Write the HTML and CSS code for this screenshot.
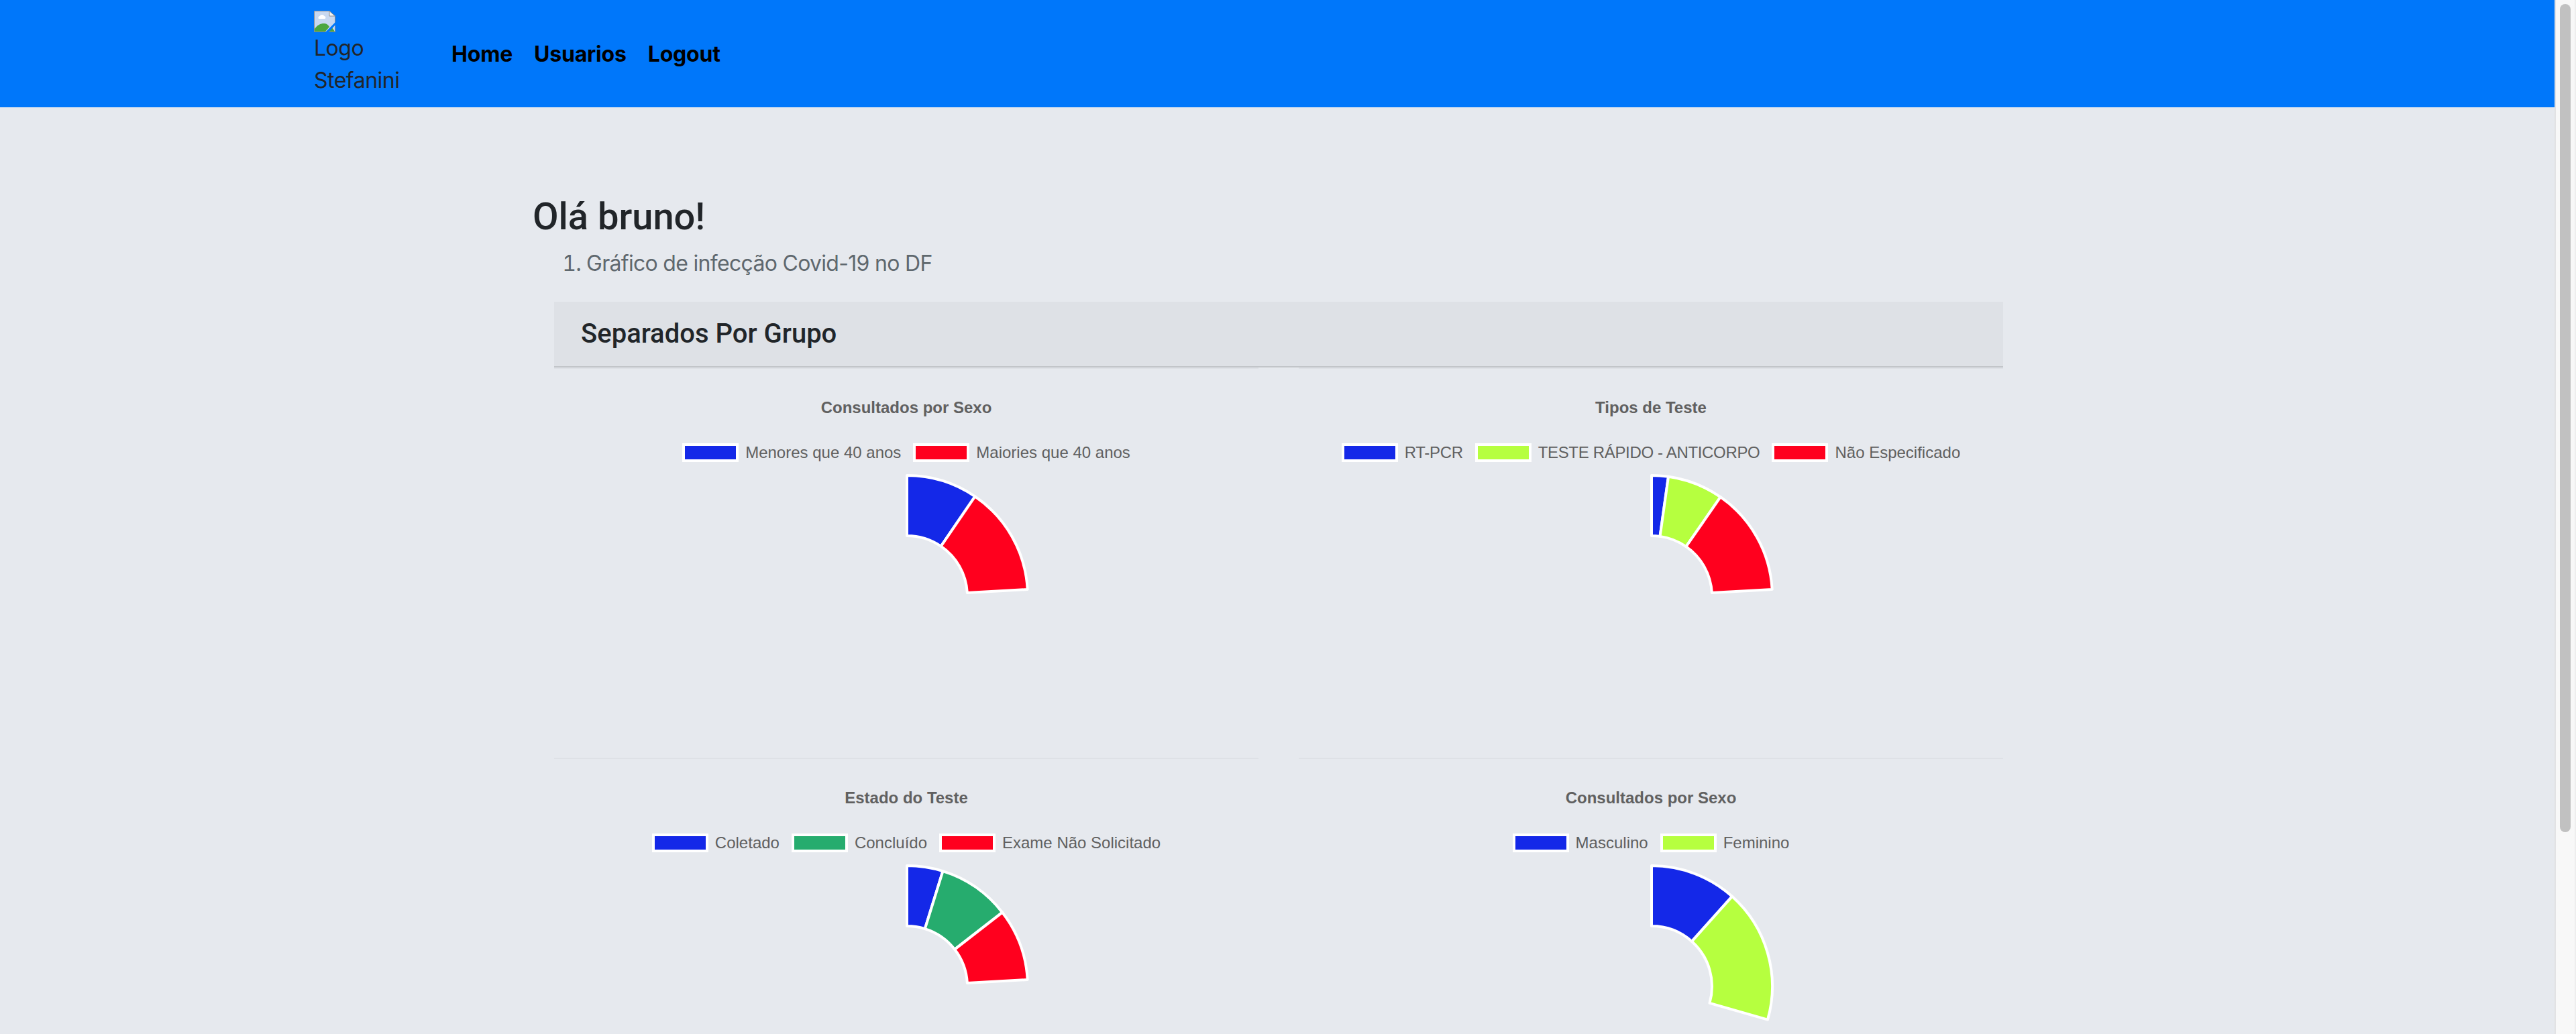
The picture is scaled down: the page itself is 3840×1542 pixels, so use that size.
FILE: index.html
```html
<!DOCTYPE html>
<html lang="pt-BR">
  <head>
    <meta charset="UTF-8" />
    <title>Dashboard</title>
    <link rel="stylesheet" href="styles.css">
  </head>
  <body>
    <div class="shell">
      <div class="page">
        <nav class="navbar">
          <div class="logo">
            <svg class="broken-img" width="32" height="32" viewBox="0 0 32 32">
              <path d="M.5.5H23L31.500 8V31.500H.5Z" fill="#c8d8f0" stroke="#8f8f8f" />
              <path d="M23 .5V8H31.500Z" fill="#f4f4f4" stroke="#8f8f8f" />
              <path d="M7 12a2.500 2.500 0 0 1 1.500-4a4 4 0 0 1 7 0a2.200 2.200 0 0 1 1 4Z" fill="#fff" />
              <path d="M1 31V27C5 21 11 18.500 16 19C19 19.500 21 21 23 24L17 31Z" fill="#4ba63f" />
              <path d="M27 25L31 31H22Z" fill="#4ba63f" />
              <path d="M32 17V21L22 32H17Z" fill="#0077fa" />
            </svg>
            <div>Logo Stefanini</div>
          </div>
          <a class="nav-link" href="#">Home</a>
          <a class="nav-link" href="#">Usuarios</a>
          <a class="nav-link" href="#">Logout</a>
        </nav>

        <main class="content">
          <h1 class="greeting">Olá bruno!</h1>
          <ol class="topics">
            <li>Gráfico de infecção Covid-19 no DF</li>
          </ol>

          <section class="card">
            <h2 class="card-header">Separados Por Grupo</h2>
            <div class="charts">
              <div class="chart">
                <div class="chart-title">Consultados por Sexo</div>
                <div class="legend">
                  <span class="legend-item"><i class="swatch blue"></i>Menores que 40 anos</span>
                  <span class="legend-item"><i class="swatch red"></i>Maiories que 40 anos</span>
                </div>
                <svg class="donut" width="400" height="400" viewBox="-201 -190 400 400">
                  <path class="blue" d="M0 -180A180 180 0 0 1 101.400 -148.700L50.700 -74.300A90 90 0 0 0 0 -90Z" />
                  <path class="red" d="M101.400 -148.700A180 180 0 0 1 179.700 -10.050L89.860 -5.020A90 90 0 0 0 50.700 -74.300Z" />
                </svg>
              </div>

              <div class="chart">
                <div class="chart-title">Tipos de Teste</div>
                <div class="legend">
                  <span class="legend-item caps"><i class="swatch blue"></i>RT-PCR</span>
                  <span class="legend-item caps"><i class="swatch lime"></i>TESTE RÁPIDO - ANTICORPO</span>
                  <span class="legend-item"><i class="swatch red"></i>Não Especificado</span>
                </div>
                <svg class="donut" width="400" height="400" viewBox="-201 -190 400 400">
                  <path class="blue" d="M0 -180A180 180 0 0 1 25.050 -178.250L12.530 -89.120A90 90 0 0 0 0 -90Z" />
                  <path class="lime" d="M25.050 -178.250A180 180 0 0 1 102.700 -147.800L51.400 -73.900A90 90 0 0 0 12.530 -89.120Z" />
                  <path class="red" d="M102.700 -147.800A180 180 0 0 1 179.700 -10.050L89.860 -5.020A90 90 0 0 0 51.400 -73.900Z" />
                </svg>
              </div>

              <div class="chart">
                <div class="chart-title">Estado do Teste</div>
                <div class="legend">
                  <span class="legend-item"><i class="swatch blue"></i>Coletado</span>
                  <span class="legend-item"><i class="swatch green"></i>Concluído</span>
                  <span class="legend-item"><i class="swatch red"></i>Exame Não Solicitado</span>
                </div>
                <svg class="donut" width="400" height="400" viewBox="-201 -190 400 400">
                  <path class="blue" d="M0 -180A180 180 0 0 1 53.500 -171.900L26.800 -85.900A90 90 0 0 0 0 -90Z" />
                  <path class="green" d="M53.500 -171.900A180 180 0 0 1 142.200 -110.300L71.100 -55.200A90 90 0 0 0 26.800 -85.900Z" />
                  <path class="red" d="M142.200 -110.300A180 180 0 0 1 179.700 -10.050L89.860 -5.020A90 90 0 0 0 71.100 -55.200Z" />
                </svg>
              </div>

              <div class="chart">
                <div class="chart-title">Consultados por Sexo</div>
                <div class="legend">
                  <span class="legend-item"><i class="swatch blue"></i>Masculino</span>
                  <span class="legend-item"><i class="swatch lime"></i>Feminino</span>
                </div>
                <svg class="donut" width="400" height="400" viewBox="-201 -190 400 400">
                  <path class="blue" d="M0 -180A180 180 0 0 1 120 -134.200L60 -67.100A90 90 0 0 0 0 -90Z" />
                  <path class="lime" d="M120 -134.200A180 180 0 0 1 173 49.600L86.500 24.800A90 90 0 0 0 60 -67.100Z" />
                </svg>
              </div>
            </div>
          </section>
        </main>
      </div>

      <div class="scrollbar"><div class="scroll-thumb"></div></div>
    </div>
  </body>
</html>
```

FILE: styles.css
```css
* {
  box-sizing: border-box;
}
html,
body {
  margin: 0;
  padding: 0;
  height: 100%;
  overflow: hidden;
}
body {
  font-family: Inter, Roboto, sans-serif;
  font-size: 32px;
  line-height: 48px;
  color: #212529;
  background: #e6e9ee;
}
.shell {
  display: flex;
  height: 100vh;
}
.page {
  width: 3810px;
  height: 100%;
  overflow: hidden;
}

/* top bar */
.navbar {
  display: flex;
  align-items: center;
  height: 160px;
  padding-left: 468px;
  background: #0077fa;
}
.logo {
  width: 189px;
  padding-right: 40px;
  letter-spacing: -0.5px;
}
.broken-img {
  display: block;
}
.nav-link {
  padding: 1px 16px 0;
  font-weight: 700;
  letter-spacing: -0.2px;
  color: #000;
  text-decoration: none;
}

/* main area */
.content {
  padding-left: 794px;
}
.greeting {
  margin: 130px 0 12px;
  font-family: Roboto, Inter, sans-serif;
  font-size: 56px;
  font-weight: 500;
  line-height: 67px;
}
.topics {
  margin: 0 0 33px;
  padding-left: 80px;
  letter-spacing: -0.7px;
  color: #5f686e;
}
.card {
  width: 2160px;
  margin-left: 32px;
}
.card-header {
  margin: 0;
  padding: 24px 40px;
  height: 98px;
  font-family: Roboto, Inter, sans-serif;
  font-size: 40px;
  font-weight: 500;
  line-height: 48px;
  background: #dee1e6;
  border-bottom: 2px solid #c2c5c9;
}
.charts {
  display: grid;
  grid-template-columns: 1050px 1050px;
  grid-auto-rows: 582px;
  column-gap: 60px;
}

/* charts */
.chart {
  display: flex;
  flex-direction: column;
  align-items: center;
  padding-top: 44px;
  border-top: 2px solid #dee1e6;
  font-family: "Liberation Sans", Arial, sans-serif;
  font-size: 24px;
  line-height: 28px;
  color: #606060;
}
.chart-title {
  font-weight: 700;
}
.legend {
  display: flex;
  justify-content: center;
  gap: 18px;
  margin-top: 39px;
}
.legend-item {
  display: flex;
  align-items: center;
  gap: 10px;
}
.legend-item.caps {
  letter-spacing: -0.33px;
}
.swatch {
  display: block;
  width: 84px;
  height: 28px;
  border: 4px solid #fff;
}
.swatch.blue {
  background: #1428e8;
}
.swatch.red {
  background: #ff001e;
}
.swatch.lime {
  background: #b6ff3f;
}
.swatch.green {
  background: #26ac6e;
}
.donut {
  display: block;
  margin-top: 10px;
}
.donut path {
  stroke: #fff;
  stroke-width: 4;
  stroke-linejoin: round;
}
.donut .blue {
  fill: #1428e8;
}
.donut .red {
  fill: #ff001e;
}
.donut .lime {
  fill: #b6ff3f;
}
.donut .green {
  fill: #26ac6e;
}

/* page scrollbar, the page is longer than the window */
.scrollbar {
  flex: 1;
  padding: 6px 6px 0;
  background: #f8f8f8;
  border-left: 2px solid #e2e2e4;
  border-right: 2px solid #eee;
}
.scroll-thumb {
  width: 16px;
  height: 1235px;
  border-radius: 8px;
  background: #c1c1c1;
}
```
